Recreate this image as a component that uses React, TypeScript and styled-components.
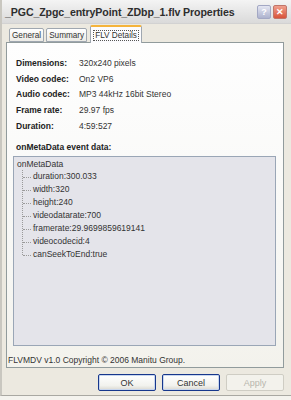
import React from 'react'
import styled, { createGlobalStyle } from 'styled-components'

const Global = createGlobalStyle`
  html, body {
    margin: 0;
    padding: 0;
    background: #ffffff;
  }
  body {
    width: 291px;
    height: 400px;
    overflow: hidden;
    font-family: "Liberation Sans", Tahoma, sans-serif;
  }
`

const Window = styled.div`
  width: 291px;
  height: 396px;
  box-sizing: border-box;
  background: #ECE9E0;
  border-left: 2px solid #C9C7C0;
  border-bottom: 1px solid #A9A8A2;
  display: flex;
  flex-direction: column;
`

const TitleBar = styled.div`
  height: 23px;
  flex: none;
  display: flex;
  align-items: center;
  padding: 0 4px 0 3px;
  background: linear-gradient(#F4F4F4, #E4E4E4 60%, #DADADA);
  border-bottom: 1px solid #D2D2D2;
`

const Title = styled.div`
  flex: 1;
  font-weight: bold;
  font-size: 10.6px;
  color: #2E2E2E;
  white-space: nowrap;
  letter-spacing: -0.1px;
`

const CaptionButton = styled.div<{ $close?: boolean }>`
  width: 12px;
  height: 12px;
  margin-left: 2px;
  border: 1px solid ${p => (p.$close ? '#C0756A' : '#A3A8C4')};
  border-radius: 2px;
  background: ${p =>
    p.$close
      ? 'linear-gradient(#F0A08E, #D8533A)'
      : 'linear-gradient(#E4E6F2, #AEB3CE)'};
  color: #ffffff;
  font-size: 9px;
  font-weight: bold;
  display: flex;
  align-items: center;
  justify-content: center;
`

const TabRow = styled.div`
  display: flex;
  align-items: flex-end;
  padding: 1px 0 0 7px;
  height: 17px;
  flex: none;
`

const Tab = styled.div<{ $active?: boolean }>`
  box-sizing: border-box;
  height: ${p => (p.$active ? '18px' : '14px')};
  margin-left: ${p => (p.$active ? '1px' : '0')};
  margin-right: ${p => (p.$active ? '0' : '2px')};
  margin-bottom: ${p => (p.$active ? '-1px' : '0')};
  padding: 0 ${p => (p.$active ? '3px' : '2px')};
  border: 1px solid #9FA7B0;
  border-bottom: ${p => (p.$active ? 'none' : '1px solid #9FA7B0')};
  border-top: ${p => (p.$active ? '2px solid #F5B43C' : '1px solid #9FA7B0')};
  border-radius: 2px 2px 0 0;
  background: ${p => (p.$active ? '#FCFCFE' : 'linear-gradient(#FFFFFF, #ECEBE6)')};
  font-size: 8.2px;
  color: #333333;
  display: flex;
  align-items: center;
  position: relative;
  z-index: ${p => (p.$active ? 2 : 1)};
`

const TabLabel = styled.span<{ $focus?: boolean }>`
  padding: 0 1px;
  outline: ${p => (p.$focus ? '1px dotted #555' : 'none')};
`

const Panel = styled.div`
  flex: 1;
  margin: 0 7px 0 4px;
  border: 1px solid #919B9C;
  background: linear-gradient(#FEFEFE, #F7F7F4 70%, #F3F2EC);
  display: flex;
  flex-direction: column;
  padding: 14px 0 0 0;
  min-height: 0;
  font-size: 8.5px;
  color: #333333;
`

const InfoGrid = styled.div`
  display: grid;
  grid-template-columns: 63px 1fr;
  row-gap: 3.65px;
  padding-left: 9px;
  line-height: 12px;
`

const Label = styled.div`
  font-weight: bold;
  color: #222222;
`

const SectionTitle = styled.div`
  margin-top: 9px;
  padding-left: 9px;
  line-height: 12px;
  font-weight: bold;
  color: #222222;
`

const TreeBox = styled.div`
  box-sizing: border-box;
  margin: 3px 7px 0 6px;
  height: 190px;
  flex: none;
  border: 1px solid #9AA6B6;
  background: #E4E4EA;
  padding: 1px 0 0 3px;
`

const TreeRoot = styled.div`
  line-height: 12px;
`

const TreeChildren = styled.div`
  margin-left: 5px;
  border-left: 1px dotted #9A9A9A;
  height: 85px;
`

const TreeItem = styled.div`
  position: relative;
  line-height: 13px;
  padding-left: 10px;
  &::before {
    content: '';
    position: absolute;
    left: 0;
    top: 7px;
    width: 8px;
    border-top: 1px dotted #9A9A9A;
  }
`

const Footer = styled.div`
  line-height: 12px;
  padding: 8px 0 0 1px;
`

const ButtonRow = styled.div`
  display: flex;
  justify-content: flex-end;
  gap: 6px;
  padding: 6px 7px 4px 0;
  flex: none;
`

const Button = styled.div<{ $disabled?: boolean }>`
  width: 58px;
  height: 17px;
  box-sizing: border-box;
  border: 1px solid ${p => (p.$disabled ? '#CFCDC4' : '#17378C')};
  border-radius: 2px;
  background: ${p =>
    p.$disabled ? '#F3F2EC' : 'linear-gradient(#FFFFFF, #F2F2EE 70%, #DAD8D0)'};
  box-shadow: ${p => (p.$disabled ? 'none' : 'inset 0 0 0 1px #C8D6EE')};
  color: ${p => (p.$disabled ? '#B8B6AC' : '#333333')};
  font-size: 9px;
  display: flex;
  align-items: center;
  justify-content: center;
`

const BottomStrip = styled.div`
  height: 4px;
  background: #F4F3EE;
`

const info: [string, string][] = [
  ['Dimensions:', '320x240 pixels'],
  ['Video codec:', 'On2 VP6'],
  ['Audio codec:', 'MP3 44kHz 16bit Stereo'],
  ['Frame rate:', '29.97 fps'],
  ['Duration:', '4:59:527'],
]

const meta = [
  'duration:300.033',
  'width:320',
  'height:240',
  'videodatarate:700',
  'framerate:29.9699859619141',
  'videocodecid:4',
  'canSeekToEnd:true',
]

export default function App() {
  return (
    <>
      <Global />
      <Window>
        <TitleBar>
          <Title>_PGC_Zpgc_entryPoint_ZDbp_1.flv Properties</Title>
          <CaptionButton>?</CaptionButton>
          <CaptionButton $close>✕</CaptionButton>
        </TitleBar>
        <TabRow>
          <Tab>General</Tab>
          <Tab>Summary</Tab>
          <Tab $active>
            <TabLabel $focus>FLV Details</TabLabel>
          </Tab>
        </TabRow>
        <Panel>
          <InfoGrid>
            {info.map(([k, v]) => (
              <React.Fragment key={k}>
                <Label>{k}</Label>
                <div>{v}</div>
              </React.Fragment>
            ))}
          </InfoGrid>
          <SectionTitle>onMetaData event data:</SectionTitle>
          <TreeBox>
            <TreeRoot>onMetaData</TreeRoot>
            <TreeChildren>
              {meta.map(m => (
                <TreeItem key={m}>{m}</TreeItem>
              ))}
            </TreeChildren>
          </TreeBox>
          <Footer>FLVMDV v1.0 Copyright © 2006 Manitu Group.</Footer>
        </Panel>
        <ButtonRow>
          <Button>OK</Button>
          <Button>Cancel</Button>
          <Button $disabled>Apply</Button>
        </ButtonRow>
      </Window>
      <BottomStrip />
    </>
  )
}
